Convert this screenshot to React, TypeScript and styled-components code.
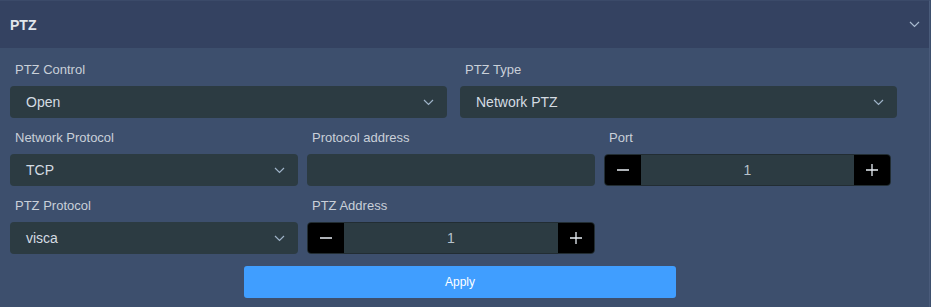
import React from "react";
import styled, { createGlobalStyle } from "styled-components";

const GlobalStyle = createGlobalStyle`
  body {
    margin: 0;
    background: #3d4f6d;
    font-family: "Liberation Sans", Arial, sans-serif;
  }
`;

const Chevron = ({ color = "#9fb3c8" }: { color?: string }) => (
  <svg width="11" height="7" viewBox="0 0 11 7" fill="none">
    <path d="M1 1l4.5 4.5L10 1" stroke={color} strokeWidth="1.2" />
  </svg>
);

const Select = ({ value }: { value: string }) => (
  <SelectBox>
    <span>{value}</span>
    <Chevron />
  </SelectBox>
);

const Stepper = ({ value }: { value: number }) => (
  <StepperBox>
    <StepButton>
      <svg width="12" height="12" viewBox="0 0 12 12">
        <path d="M0 6h12" stroke="#e8eef4" strokeWidth="1.3" />
      </svg>
    </StepButton>
    <StepValue>{value}</StepValue>
    <StepButton>
      <svg width="12" height="12" viewBox="0 0 12 12">
        <path d="M0 6h12M6 0v12" stroke="#e8eef4" strokeWidth="1.3" />
      </svg>
    </StepButton>
  </StepperBox>
);

const App = () => {
  return (
    <>
      <GlobalStyle />
      <Panel>
        <Header>
          <Title>PTZ</Title>
          <Chevron color="#a9bbd0" />
        </Header>
        <Body>
          <Row $cols="437px 437px" $gap={13}>
            <Item>
              <Label>PTZ Control</Label>
              <Select value="Open" />
            </Item>
            <Item>
              <Label>PTZ Type</Label>
              <Select value="Network PTZ" />
            </Item>
          </Row>
          <Row $cols="288px 288px 287px" $gap={9}>
            <Item>
              <Label>Network Protocol</Label>
              <Select value="TCP" />
            </Item>
            <Item>
              <Label>Protocol address</Label>
              <TextInput />
            </Item>
            <Item>
              <Label>Port</Label>
              <Stepper value={1} />
            </Item>
          </Row>
          <Row $cols="288px 288px 287px" $gap={9}>
            <Item>
              <Label>PTZ Protocol</Label>
              <Select value="visca" />
            </Item>
            <Item>
              <Label>PTZ Address</Label>
              <Stepper value={1} />
            </Item>
          </Row>
          <ApplyButton>Apply</ApplyButton>
        </Body>
      </Panel>
    </>
  );
};

const Panel = styled.div`
  width: 929px;
  border-top: 1px solid #3b4a69;
  border-right: 1px solid #4a5b7a;
  background: #3d4f6d;
`;

const Header = styled.div`
  height: 47px;
  background: #344261;
  display: flex;
  align-items: center;
  justify-content: space-between;
  padding: 0 9px 0 10px;
`;

const Title = styled.span`
  color: #e2e6ec;
  font-size: 14px;
  font-weight: 700;
`;

const Body = styled.div`
  padding: 12px 19px 9px 10px;
`;

const Row = styled.div<{ $cols: string; $gap: number }>`
  display: grid;
  grid-template-columns: ${(p) => p.$cols};
  column-gap: ${(p) => p.$gap}px;
`;

const Item = styled.div`
  display: flex;
  flex-direction: column;
  margin-bottom: 4px;
`;

const Label = styled.div`
  height: 20px;
  line-height: 20px;
  margin-bottom: 6px;
  padding-left: 5px;
  color: #c9d0d9;
  font-size: 13px;
`;

const SelectBox = styled.div`
  height: 32px;
  box-sizing: border-box;
  display: flex;
  align-items: center;
  justify-content: space-between;
  padding: 0 13px 0 16px;
  background: #2c3b42;
  border-radius: 4px;
  color: #d4dbe2;
  font-size: 14px;
  margin-bottom: 6px;
`;

const TextInput = styled.div`
  height: 32px;
  background: #2c3b42;
  border-radius: 4px;
  margin-bottom: 6px;
`;

const StepperBox = styled.div`
  height: 32px;
  box-sizing: border-box;
  display: flex;
  border: 1px solid #222d33;
  border-radius: 4px;
  overflow: hidden;
  background: #2c3b42;
  margin-bottom: 6px;
`;

const StepButton = styled.div`
  width: 36px;
  background: #000;
  display: flex;
  align-items: center;
  justify-content: center;
`;

const StepValue = styled.div`
  flex: 1;
  display: flex;
  align-items: center;
  justify-content: center;
  color: #b7c2cc;
  font-size: 14px;
`;

const ApplyButton = styled.button`
  display: block;
  width: 432px;
  height: 32px;
  margin: 2px auto 0;
  border: none;
  border-radius: 3px;
  background: #409eff;
  color: #fff;
  font-family: inherit;
  font-size: 12px;
`;

export default App;
